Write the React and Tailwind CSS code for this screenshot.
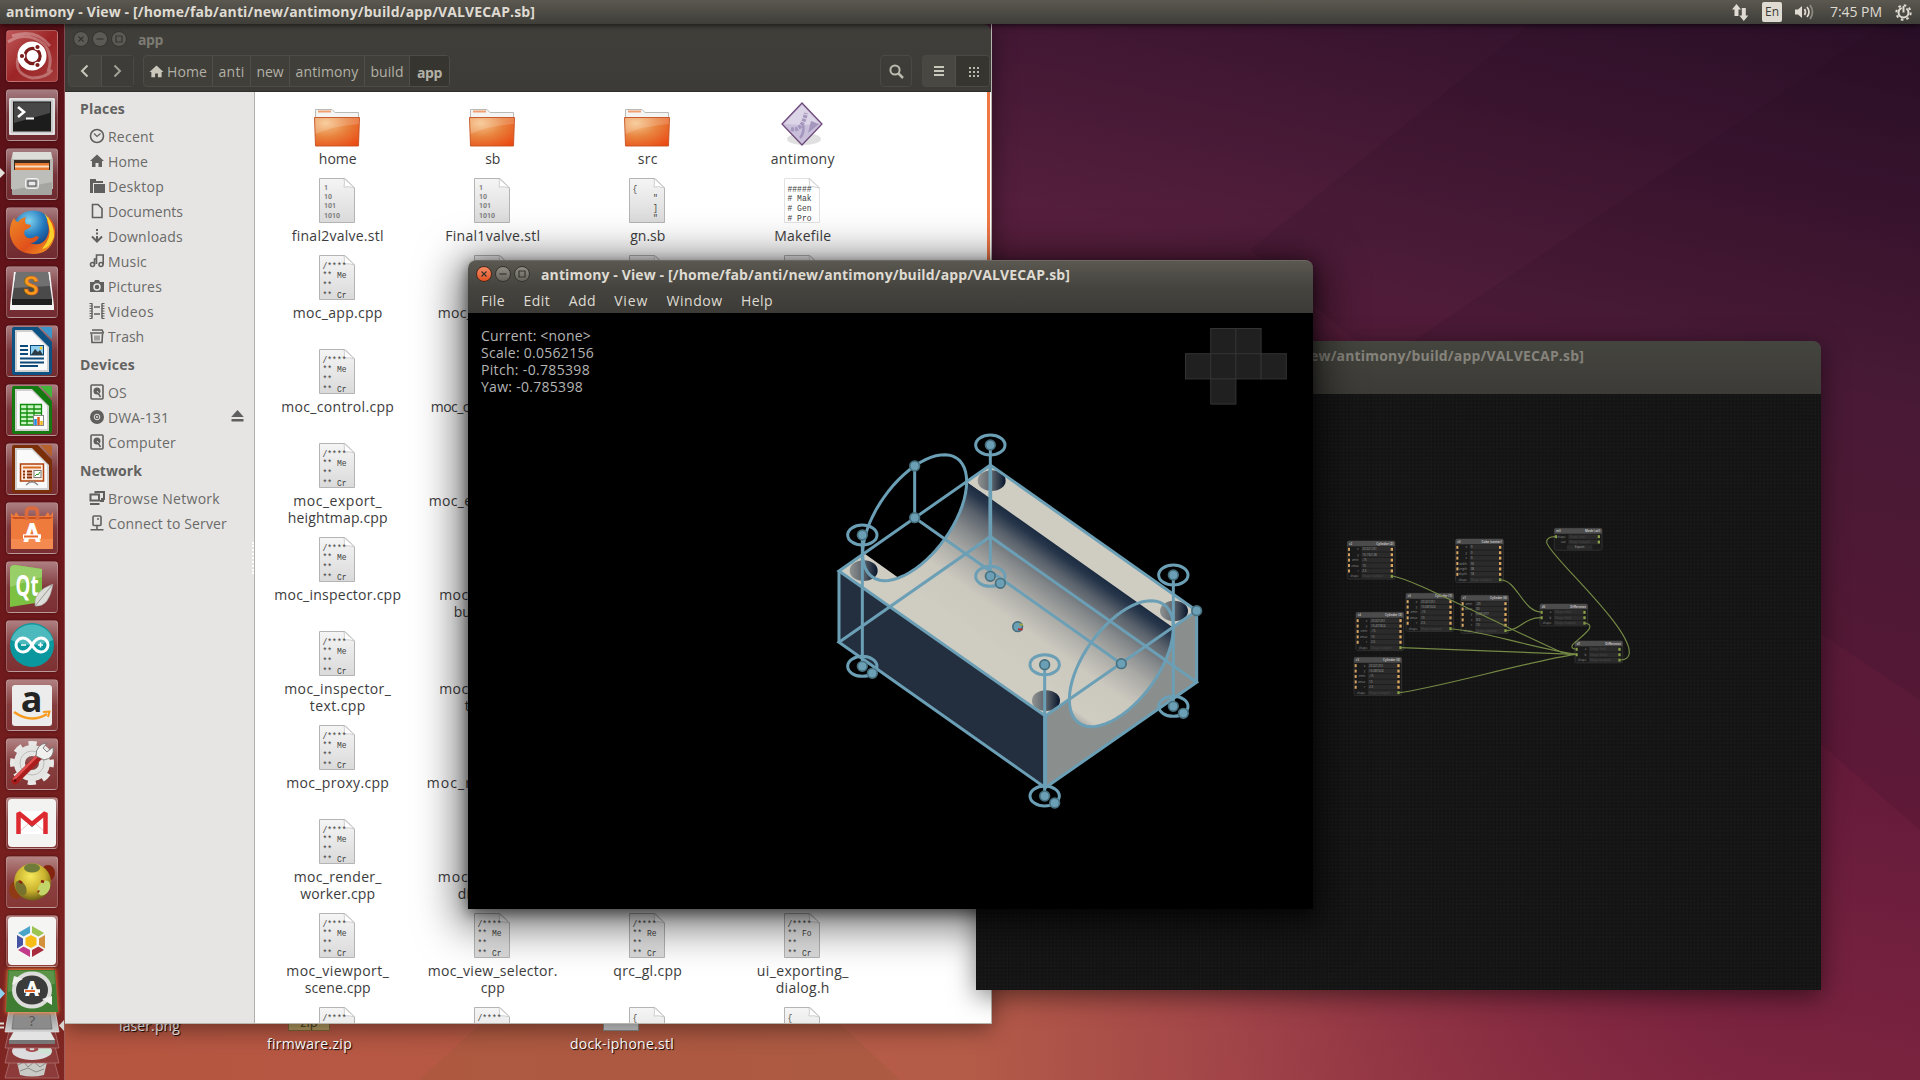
import React, { useLayoutEffect, useRef } from "react";

/* Text spread over a fixed width: letter spacing is measured at layout time. */
function Fit({ w, children, className = "" }) {
  const ref = useRef(null);
  useLayoutEffect(() => {
    const el = ref.current;
    if (!el || !w) return;
    el.style.letterSpacing = "0px";
    const natural = el.getBoundingClientRect().width;
    el.style.letterSpacing = (w - natural) / Math.max(1, el.textContent.length) + "px";
  }, [w, children]);
  return (
    <span ref={ref} className={"inline-block whitespace-pre " + className}>
      {children}
    </span>
  );
}

/* ---------- top panel ---------- */

function TopPanel() {
  return (
    <header className="absolute inset-x-0 top-0 z-50 flex h-6 items-center justify-between bg-gradient-to-b from-[#5b5850] to-[#3f3e39] pl-[6px] pr-2 text-[#dfdbd2] shadow-[0_1px_6px_rgba(0,0,0,0.7)]">
      <Fit w={529} className="-mt-px text-[14px] font-bold">
        antimony - View - [/home/fab/anti/new/antimony/build/app/VALVECAP.sb]
      </Fit>
      <div className="flex items-center">
        <svg className="mr-[13px] h-[18px] w-[18px]" viewBox="0 0 18 18" fill="#dfdbd2">
          <path d="M5.5 1 L10 6.5 H7.5 V13 H3.5 V6.5 H1z" />
          <path d="M12.8 18 L8.3 12.5 H10.8 V5 H14.8 V12.5 H17.3z" />
        </svg>
        <span className="mr-[12px] flex h-5 w-5 items-center justify-center rounded-[2px] bg-[#dfdbd2] text-[12px] leading-none text-[#3c3b37]">
          En
        </span>
        <svg className="mr-[15px] h-[18px] w-[21px]" viewBox="0 0 21 18" fill="none" strokeWidth="1.7">
          <path d="M1 6.5 H4 L8 3 V15 L4 11.5 H1z" fill="#dfdbd2" />
          <path d="M10.5 6 Q12.5 9 10.5 12" stroke="#dfdbd2" />
          <path d="M13 4 Q17 9 13 14" stroke="#dfdbd2" />
          <path d="M16 2 Q21 9 16 16" stroke="#8d8a82" />
        </svg>
        <Fit w={52} className="-mt-px mr-[13px] text-[14px]">
          7:45 PM
        </Fit>
        <svg className="h-[17px] w-[17px]" viewBox="0 0 17 17" fill="none" stroke="#dfdbd2">
          <circle cx="8.5" cy="8.5" r="5" strokeWidth="2" strokeDasharray="26.4 5" strokeDashoffset="-26.060" />
          <circle cx="8.5" cy="8.5" r="7.2" strokeWidth="2" strokeDasharray="2.6 3.06" />
          <path d="M8.5 2 V8.5" strokeWidth="2" />
        </svg>
      </div>
    </header>
  );
}

/* ---------- launcher ---------- */

function Tile({ children, plain, arrow }) {
  return (
    <div className="relative h-[52px] w-[52px] shrink-0">
      <div
        className={
          "h-full w-full overflow-hidden rounded-[4px] border border-white/20 shadow-[0_0_3px_rgba(0,0,0,0.4)] " +
          (plain || "bg-gradient-to-b from-white/45 via-white/15 to-white/10")
        }
      >
        <svg className="-ml-px -mt-px h-[52px] w-[52px]" viewBox="0 0 52 52">
          {children}
        </svg>
      </div>
      {arrow && (
        <svg className="absolute -left-[6px] top-[20px] h-[10px] w-[5px]" viewBox="0 0 5 10">
          <path d="M0 0 L5 5 L0 10z" fill="#e4e0dc" />
        </svg>
      )}
    </div>
  );
}

function OfficeDoc({ dark, light, children }) {
  return (
    <>
      <path d="M8 2 H32 L46 17 V47 Q46 50 43 50 H8 Q6 50 6 47 V4 Q6 2 8 2z" fill={dark} />
      <path d="M34 2 H44 Q46 2 46 4 V14z" fill={light} />
      <path d="M9 5 H26 L43 22 V47 H9z" fill="#d0d0d0" />
      <path d="M11 7 H26 L41 22 V45 H11z" fill="#fafafa" />
      {children}
    </>
  );
}

function Launcher() {
  return (
    <nav className="absolute bottom-0 left-0 top-6 z-10 flex w-[65px] flex-col items-start gap-[7px] border-r border-white/25 bg-gradient-to-b from-[#5a1118] via-[#6b171b] to-[#7f2622] pl-[6px] pt-[6px]">
      <Tile plain="bg-gradient-to-br from-[#c0585a] via-[#9c2426] to-[#a33a3a]">
        <path d="M2 12 Q20 0 38 14 Q48 26 42 42 M6 6 Q30 -2 44 16 M12 28 Q8 44 26 48 Q40 48 46 40" fill="none" stroke="#fff" strokeOpacity=".3" strokeWidth="3" />
        <circle cx="26" cy="26" r="14.5" fill="#fff" />
        <circle cx="26.500" cy="26" r="7.600" fill="none" stroke="#7b1c1c" strokeWidth="3.200" />
        {[[16, 26], [31.5, 17], [31.5, 35]].map(([x, y]) => (
          <circle key={y} cx={x} cy={y} r="2.700" fill="#7b1c1c" stroke="#fff" strokeWidth="1.200" />
        ))}
      </Tile>
      <Tile>
        <rect x="3" y="9" width="46" height="37" rx="1.5" fill="#c9c9c9" />
        <rect x="4" y="10" width="44" height="35" fill="none" stroke="#f4f4f4" />
        <rect x="7" y="12.500" width="38" height="30" fill="#1c1c1c" />
        <path d="M8 13.500 H44 V24 L8 34z" fill="#474747" />
        <path d="M12 18 L18 23 L12 28" fill="none" stroke="#fff" strokeWidth="2.6" />
        <path d="M20 29.500 H28" stroke="#fff" strokeWidth="2" />
      </Tile>
      <Tile arrow>
        <path d="M7 4 H45 L47 12 V41 H5 V12z" fill="#b9b9b4" />
        <path d="M7 4 H45 L46 11 H6z" fill="#dcdcd8" />
        <path d="M8 12 H44 V24 H8z" fill="#3a2b20" />
        <path d="M9 15 H43 V23 H9z" fill="#e8792e" />
        <path d="M9 17.500 H43 V19.500 H9z" fill="#f9ddbf" />
        <path d="M6 22 H46 V46 Q46 47 45 47 H7 Q6 47 6 46z" fill="#a5a5a2" />
        <path d="M6 22 H46 V34 L6 42z" fill="#bdbdba" />
        <rect x="19.500" y="30.500" width="13" height="10" rx="2" fill="#c9c9c9" stroke="#f0f0f0" />
        <rect x="22" y="33" width="8" height="5" fill="#e9e9e9" stroke="#444" />
      </Tile>
      <Tile>
        <defs>
          <radialGradient id="ffb" cx=".4" cy=".25" r=".75">
            <stop offset="0" stopColor="#7fd3ef" />
            <stop offset=".5" stopColor="#2378bd" />
            <stop offset="1" stopColor="#12306b" />
          </radialGradient>
          <linearGradient id="ffo" x1="0" y1="0" x2="1" y2="1">
            <stop offset="0" stopColor="#f08a24" />
            <stop offset=".6" stopColor="#e0501c" />
            <stop offset="1" stopColor="#f7a823" />
          </linearGradient>
        </defs>
        <circle cx="27" cy="24" r="20.500" fill="url(#ffb)" />
        <path d="M42 9 Q52 19 48 32 Q43 47 27 47 Q8 46 4 28 Q3 18 8 11 Q9 14 12 15 Q15 11 20 10 Q18 14 20 17 L25 18 Q25 21 19 23 Q17 27 20 30 Q25 33 30 29 L33 30 Q30 36 24 36 Q34 40 40 32 Q45 24 41 15z" fill="url(#ffo)" />
        <path d="M38 6 Q49 16 48 30 Q43 42 36 42 Q46 30 43 20 Q42 12 38 6z" fill="#fbd22c" />
      </Tile>
      <Tile>
        <path d="M8 6 H44 L48 40 V44 H4 V40z" fill="#f3f3f3" />
        <path d="M10 6 H42 L46 33 H6z" fill="#4a4a4a" />
        <path d="M10 6 H42 L44 20 L8 22z" fill="#707070" />
        <path d="M6 33 H46 V39 H6z" fill="#1f1f1f" />
        <text x="25" y="29" fontFamily="Roboto, sans-serif" fontWeight="700" fontSize="25" textAnchor="middle" fill="#ff9a1f" stroke="#b85c00" strokeWidth=".5">
          S
        </text>
      </Tile>
      <Tile>
        <OfficeDoc dark="#0e5284" light="#3d95c9">
          <path d="M14 21 H22 M14 25 H22 M14 29 H22 M14 33.500 H38 M14 37.500 H38 M14 41 H32" stroke="#0d4a7a" strokeWidth="1.8" />
          <rect x="24.500" y="20.500" width="13" height="9.500" fill="#8ed0f2" stroke="#0d4a7a" />
          <path d="M25 30 L29 24 L32 27 L34 25 L37 30z" fill="#2c3c44" />
          <circle cx="35" cy="23" r="1.500" fill="#f9c921" />
        </OfficeDoc>
      </Tile>
      <Tile>
        <OfficeDoc dark="#14790f" light="#42b53a">
          <path d="M14.500 20.500 H35.500 V41 H14.500z M14.500 25 H35.500 M14.500 29 H35.500 M14.500 33 H35.500 M14.500 37 H35.500 M21 20 V41 M28 20 V41" stroke="#128c0d" strokeWidth="1.300" fill="#c8f5c2" />
          <rect x="27.500" y="31.500" width="10" height="10" fill="#fff" stroke="#888" />
          <path d="M29.500 41 V35" stroke="#1b8ae0" strokeWidth="2.500" />
          <path d="M32.500 41 V33" stroke="#e05a1b" strokeWidth="2.500" />
          <path d="M35.500 41 V37" stroke="#f0b81b" strokeWidth="2.500" />
        </OfficeDoc>
      </Tile>
      <Tile>
        <OfficeDoc dark="#7a2f08" light="#b5622c">
          <rect x="14.500" y="21" width="23" height="17" fill="#fde9dc" stroke="#b0400c" strokeWidth="1.500" />
          <path d="M17 24.500 H35" stroke="#d86a20" strokeWidth="2" />
          <path d="M17 28.500 H19 M17 31.500 H19 M17 34.500 H19 M21 28.500 H26 M21 31.500 H26 M21 34.500 H26" stroke="#8a2c05" strokeWidth="2" />
          <rect x="28" y="27.500" width="7" height="7" fill="#fff" stroke="#777" />
          <path d="M29 33 L31 31 L32 32 L34 29" stroke="#2a9a2a" fill="none" />
          <path d="M20 42 L24 39 H28 L32 42" fill="none" stroke="#888" strokeWidth="1.500" />
        </OfficeDoc>
      </Tile>
      <Tile>
        <path d="M5 11 L8 14 L10 10 L13 14 H39 L42 10 L44 14 L47 10 V47 H5z" fill="#ee7a3c" />
        <path d="M5 15 H47 L44 17 H8z" fill="#c9511f" />
        <path d="M5 37 H47 V47 H5z" fill="#f58a50" />
        <path d="M20.500 18 V10 Q20.500 6 26 6 Q31.500 6 31.500 10 V18" fill="none" stroke="#dd6a3c" strokeWidth="3.500" />
        <text x="26" y="40" fontFamily="Roboto, sans-serif" fontWeight="900" fontSize="25" textAnchor="middle" fill="#fff">
          A
        </text>
        <path d="M17 34.500 H35" stroke="#fff" strokeWidth="4.500" />
        <path d="M18 34.500 H32" stroke="#e8672a" strokeWidth="2" />
      </Tile>
      <Tile>
        <path d="M4 8 Q4 4 9 4 L36 8 V41 L4 46z" fill="#7cc142" />
        <path d="M4 8 Q4 4 9 4 L36 8 V16 L4 26z" fill="#98cf68" />
        <text x="21" y="35" fontFamily="Open Sans, sans-serif" fontWeight="700" fontSize="28" textLength="23" lengthAdjust="spacingAndGlyphs" textAnchor="middle" fill="#fff">
          Qt
        </text>
        <path d="M47 23 Q27 30 29 45 Q43 47 47 23z" fill="#dcdcd8" stroke="#9a9a96" strokeWidth=".5" />
        <path d="M47 23 Q38 34 29 45" stroke="#9a9a96" fill="none" />
      </Tile>
      <Tile>
        <circle cx="26" cy="25" r="22" fill="#0a979d" />
        <path d="M5 20 A22 22 0 0 1 47 20 Q26 30 5 20z" fill="#4cb9bc" />
        <path d="M26 25 Q22 18 17 18 A7 7 0 0 0 17 32 Q22 32 26 25 Q30 18 35 18 A7 7 0 0 1 35 32 Q30 32 26 25z" fill="none" stroke="#fff" strokeWidth="3" />
        <path d="M15 25 H20 M32 25 H37 M34.500 22.500 V27.500" stroke="#fff" strokeWidth="1.500" />
      </Tile>
      <Tile>
        <rect x="6" y="6" width="40" height="41" rx="3" fill="#ececec" />
        <text x="25.500" y="33" fontFamily="Open Sans, sans-serif" fontWeight="700" fontSize="36" textAnchor="middle" fill="#242424">
          a
        </text>
        <path d="M8 33 Q25 45 41 35" fill="none" stroke="#f79a1c" strokeWidth="2.500" />
        <path d="M37 33 L43.500 32.500 L42 38" fill="none" stroke="#f79a1c" strokeWidth="2" />
      </Tile>
      <Tile>
        <circle cx="26" cy="25" r="19" fill="none" stroke="#e8e8e6" strokeWidth="6" strokeDasharray="8 6.920" strokeDashoffset="4" />
        <circle cx="26" cy="25" r="12.500" fill="none" stroke="#e4e4e2" strokeWidth="11" />
        <circle cx="26" cy="25" r="12" fill="none" stroke="#bdbdbb" strokeWidth="1" />
        <path d="M9 43 L34 18" stroke="#a91d1d" strokeWidth="7" strokeLinecap="round" />
        <path d="M8 41 L32 17" stroke="#e05050" strokeWidth="2.500" strokeLinecap="round" />
        <path d="M30 18 Q30 6 41 5 L37 10 L41 14 L47 9 Q49 20 38 22z" fill="#f0f0ee" stroke="#6a6a6a" strokeWidth=".8" />
        <circle cx="9" cy="42.500" r="1.500" fill="#5c0d0d" />
      </Tile>
      <Tile>
        <rect x="2" y="2" width="48" height="48" rx="4" fill="#f3f3f1" />
        <path d="M11 14 H41 V37 H11z" fill="#fff" />
        <path d="M12 36 L23 26 M40 36 L29 26" stroke="#e7a5a2" strokeWidth=".7" />
        <path d="M17 20 L26 29.500 L35 20" fill="none" stroke="#777" strokeWidth="1.500" />
        <path d="M12.500 37 V16 L26 27 L39.500 16 V37" fill="none" stroke="#dd2a30" strokeWidth="4.500" strokeLinejoin="bevel" />
      </Tile>
      <Tile>
        <defs>
          <radialGradient id="ball" cx=".45" cy=".35" r=".65">
            <stop offset="0" stopColor="#f7e85a" />
            <stop offset=".6" stopColor="#c9b22e" />
            <stop offset="1" stopColor="#6e6015" />
          </radialGradient>
        </defs>
        <ellipse cx="10" cy="34" rx="7" ry="9" fill="#8f3a14" />
        <ellipse cx="42" cy="17" rx="7" ry="8" fill="#82240f" />
        <circle cx="26.500" cy="26" r="18.500" fill="url(#ball)" />
        <ellipse cx="26" cy="12" rx="8" ry="4.500" fill="#6f7c39" />
        <ellipse cx="15" cy="32" rx="5" ry="8" transform="rotate(-25 15 32)" fill="#77732f" />
        <ellipse cx="38" cy="32" rx="5.500" ry="8" transform="rotate(30 38 32)" fill="#c3d568" />
        <path d="M35 25 L38 26 M13 25 L16 27 M32 35 L33 36" stroke="#8c2410" strokeWidth="2.500" />
      </Tile>
      <Tile>
        <rect x="2" y="2" width="48" height="48" rx="4" fill="#f5f5f4" />
        <path d="M25 20 L30.500 23 V30 L25 33 L19.500 30 V23z" fill="#f7bd16" />
        <path d="M24 11 V18 L17.500 21.500 L12 18z" fill="#4aa3c9" />
        <path d="M26 11 V18 L32.500 21.500 L38 18z" fill="#9cc452" />
        <path d="M11 20 L17 23.500 V30 L11 33.500z" fill="#4553a3" />
        <path d="M39 20 L33 23.500 V30 L39 33.500z" fill="#d3913c" />
        <path d="M24 42 V35 L17.500 31.500 L12 35z" fill="#c33a8b" />
        <path d="M26 42 V35 L32.500 31.500 L38 35z" fill="#a82c3c" />
      </Tile>
      <svg className="-ml-[6px] -mt-[11px] h-[117px] w-[65px] shrink-0" viewBox="0 963 65 117">
        <defs>
          <filter id="glow" x="-30%" y="-30%" width="160%" height="160%">
            <feGaussianBlur stdDeviation="2" />
          </filter>
          <linearGradient id="gry" x1="0" y1="0" x2="0" y2="1">
            <stop offset="0" stopColor="#8c8c8c" />
            <stop offset="1" stopColor="#d0d0d0" />
          </linearGradient>
        </defs>
        <path d="M10 1060 H54 L59 1078 H5z" fill="#8d3a3a" stroke="#b57a78" strokeWidth=".7" />
        <path d="M17 1062 Q32 1058 47 1062 L44 1075 Q32 1078 20 1075z" fill="#c9c9c6" />
        <path d="M18 1065 L24 1062 L28 1067 L34 1062 L40 1067 L46 1063 M20 1071 L28 1068 L36 1072 L44 1069" fill="none" stroke="#8a8a88" />
        <path d="M9 1046 H55 L59 1063 H5z" fill="#8d3a3a" stroke="#b57a78" strokeWidth=".7" />
        <ellipse cx="32" cy="1051" rx="20" ry="9" fill="#dcdcdf" />
        <path d="M32 1051 L49 1047 Q53 1051 50 1055z" fill="#cfe3d4" />
        <ellipse cx="32" cy="1049" rx="6.500" ry="3" fill="#a44c50" />
        <ellipse cx="32" cy="1049" rx="2.500" ry="1.200" fill="#d8d8d8" />
        <path d="M9 1031 H55 L59 1048 H5z" fill="#843636" stroke="#b57a78" strokeWidth=".7" />
        <path d="M14 1031 H50 L55 1040 V1044 H9 V1040z" fill="#e3e3e3" />
        <path d="M9 1040 H55 V1044 H9z" fill="#777" />
        <path d="M9 1010 H55 L59 1032 H5z" fill="url(#gry)" stroke="#e0dede" strokeWidth=".7" />
        <path d="M14 1014 H50 L52 1029 H12z" fill="#8b8b8b" stroke="#777" />
        <text x="32" y="1026" fontFamily="Open Sans, sans-serif" fontSize="15" textAnchor="middle" fill="#555">?</text>
        <path d="M8 969 H55 L58 1013 H6z" fill="#ff8a3c" filter="url(#glow)" />
        <path d="M8 970 H55 L58 1012 H6z" fill="#3f7d33" />
        <path d="M9 971 H54 L55 984 L8 992z" fill="#5b9448" />
        <ellipse cx="32" cy="990" rx="18" ry="16.500" fill="#3b3b3b" stroke="#dcdcda" strokeWidth="4" />
        <path d="M12 985 L14 976 L23 979z M52 996 L52 1005 L42 999z" fill="#efefed" />
        <text x="32" y="996" fontFamily="Roboto, sans-serif" fontWeight="900" fontSize="20" textAnchor="middle" fill="#fff">A</text>
        <path d="M24 991 H40" stroke="#fff" strokeWidth="3.500" />
        <path d="M25 991 H35" stroke="#e8672a" strokeWidth="2" />
        <path d="M0 988 L5 993.500 L0 999z" fill="#8fd0ee" />
        <path d="M0 1023.500 H4 M0 1027.500 H4" stroke="#e0dcd8" strokeWidth="2" />
        <path d="M64 1020 L59 1025.500 L64 1031z" fill="#d8d4d0" />
      </svg>
    </nav>
  );
}

/* ---------- window parts ---------- */

function WindowButtons({ active }) {
  const ring = "flex h-4 w-4 items-center justify-center rounded-full border ";
  const grey = active
    ? "border-[#33322e] bg-gradient-to-b from-[#8f8c83] to-[#66645d]"
    : "border-[#35342f] bg-[#5c5a55]";
  const red = active ? "border-[#4a2a1c] bg-gradient-to-b from-[#f58a64] to-[#e1511e]" : grey;
  return (
    <div className="flex gap-[3px]">
      {[["M4.500 4.500 L9.500 9.500 M9.500 4.500 L4.500 9.500", red], ["M3.500 7 H10.500", grey], ["M4 4 H10 V10 H4z", grey]].map(([d, tone]) => (
        <span key={d} className={ring + tone}>
          <svg className="h-[14px] w-[14px] shrink-0" viewBox="0 0 14 14" fill="none" stroke="#35342f" strokeWidth="1.200">
            <path d={d} />
          </svg>
        </span>
      ))}
    </div>
  );
}

/* ---------- file manager ---------- */

const S = { fill: "none", stroke: "#5f5f5f", strokeWidth: 1.6 };
const icons = {
  recent: (<g {...S}><circle cx="8" cy="8" r="6.500" /><path d="M5 5.500 L8 8.500 L11.500 5.500" strokeWidth="1.200" /></g>),
  home: (<path d="M8 1.500 L15 8 H13 V14 H9.500 V10 H6.500 V14 H3 V8 H1z" fill="#5f5f5f" />),
  desktop: (<g><path d="M1 1 H7 V3 H14 V5 H4 V15 H1z" fill="#5f5f5f" /><path d="M5 6 H16 V15 H5z" fill="#5f5f5f" /></g>),
  doc: (<path d="M3.500 1.500 H9 L13 5.500 V14.500 H3.500z" {...S} />),
  down: (<g><path d="M8 1 V3 M8 4.500 V6.500 M8 8 V13" stroke="#5f5f5f" strokeWidth="2" /><path d="M3 8.500 L8 13.500 L13 8.500" {...S} strokeWidth="2" /></g>),
  music: (<g {...S}><circle cx="3.500" cy="11.500" r="2" /><circle cx="12" cy="11.500" r="2" /><path d="M5.500 11.500 V6 H8 M7.500 11 V2 H14.200 V11.500" /></g>),
  camera: (<g><path d="M1 4 H5 L6 2 H10 L11 4 H15 V14 H1z" fill="#5f5f5f" /><circle cx="8" cy="9" r="3" fill="#5f5f5f" stroke="#e6e5e3" strokeWidth="1.500" /></g>),
  film: (<g><path d="M3 1 V15 M13 1 V15 M5 4 H11 M5 11 H11" {...S} strokeWidth="1.400" /><path d="M2 0 V16 M14 0 V16" stroke="#5f5f5f" strokeWidth="3" strokeDasharray="1 1.500" /></g>),
  trash: (<g {...S}><path d="M1 5 H15 M3 2 H13 L14.500 5 M2.500 6 L3 14.500 H13 L13.500 6" /><path d="M6 7.500 V12.500 M8 7.500 V12.500 M10 7.500 V12.500" strokeWidth="1" /></g>),
  disk: (<g><rect x="2" y="1" width="12" height="14" rx="1" {...S} /><circle cx="8" cy="7" r="3.500" fill="#5f5f5f" /><path d="M8 7 L12 12" stroke="#e6e5e3" /><path d="M9 9 L11.500 13" stroke="#5f5f5f" strokeWidth="1.500" /></g>),
  cd: (<g><circle cx="8" cy="8" r="7" fill="#5f5f5f" /><circle cx="8" cy="8" r="2.800" fill="none" stroke="#e6e5e3" /><circle cx="8" cy="8" r="1" fill="#e6e5e3" /></g>),
  net: (<g {...S}><path d="M6.500 3.500 V2 H15 V9 H12" strokeWidth="2" /><rect x="1.500" y="4.500" width="8.500" height="6" strokeWidth="2" /><path d="M1 14 H10.500 M11 11 H15" strokeWidth="2" /></g>),
  server: (<g {...S}><rect x="4" y="1" width="8" height="9.500" rx="1" /><path d="M8 11 V14 M1.500 14.800 H14.500 M8 4 H10" /></g>),
};

const places = [
  ["Places", 45, [["recent", "Recent", 46], ["home", "Home", 40], ["desktop", "Desktop", 56], ["doc", "Documents", 75], ["down", "Downloads", 75], ["music", "Music", 39], ["camera", "Pictures", 54], ["film", "Videos", 46], ["trash", "Trash", 36]]],
  ["Devices", 55, [["disk", "OS", 19], ["cd", "DWA-131", 61, true], ["disk", "Computer", 68]]],
  ["Network", 62, [["net", "Browse Network", 112], ["server", "Connect to Server", 119]]],
];

function Sidebar() {
  return (
    <aside className="relative w-[190px] shrink-0 border-r border-[#b3afaa] bg-[#e6e5e3] pt-[1px] text-[14px] text-[#6a6a69]">
      {places.map(([title, w, items]) => (
        <section key={title}>
          <h2 className="flex h-[31px] items-center pl-[15px] font-bold text-[#626261]">
            <Fit w={w}>{title}</Fit>
          </h2>
          {items.map(([icon, label, lw, eject]) => (
            <div key={label} className="flex h-[25px] items-center pl-6">
              <svg className="-mt-[2px] mr-[3px] h-4 w-4" viewBox="0 0 16 16">{icons[icon]}</svg>
              <Fit w={lw}>{label}</Fit>
              {eject && (
                <svg className="-mt-[3px] ml-auto mr-[10px] h-3 w-[13px]" viewBox="0 0 13 12" fill="#5f5f5f">
                  <path d="M6.500 0 L12.800 7 H0.200z M0.500 9 H12.500 V11.500 H0.500z" />
                </svg>
              )}
            </div>
          ))}
        </section>
      ))}
      <div className="absolute right-0 top-[450px] h-8 border-r-2 border-dotted border-white" />
    </aside>
  );
}

function Folder() {
  return (
    <svg className="h-12 w-12" viewBox="0 0 48 48">
      <defs>
        <radialGradient id="fold" cx=".25" cy=".2" r="1">
          <stop offset="0" stopColor="#f6c48a" />
          <stop offset=".5" stopColor="#e8813c" />
          <stop offset="1" stopColor="#ea4a13" />
        </radialGradient>
      </defs>
      <path d="M2.500 20 V9.500 H19 L22 12.500 H45.500 V20z" fill="#f4f4f2" stroke="#b9b9b6" />
      <path d="M5 11.500 H18" stroke="#f0a070" strokeWidth="2" />
      <path d="M1.500 17.500 H46.500 L45.500 46 H2.500z" fill="url(#fold)" stroke="#c4501f" strokeWidth=".9" />
      <path d="M2 18 H46 V24 Q20 26 2.500 34z" fill="#fff" opacity=".17" />
    </svg>
  );
}

function Executable() {
  return (
    <svg className="h-12 w-12" viewBox="0 0 48 48">
      <ellipse cx="26" cy="39" rx="17" ry="6" fill="#000" opacity=".12" />
      <path d="M24 3 L44 24 L24 45 L4 24z" fill="#c9bfda" stroke="#6f4a7c" strokeWidth="1.300" />
      <path d="M24 5 L42 24 L24 25 L6 24z" fill="#e9e3f0" opacity=".6" />
      <path d="M13 29 Q24 32 28 13" fill="none" stroke="#a596bd" strokeWidth="4" strokeDasharray="3 1" />
      <path d="M22 38 Q27 32 25 25" fill="none" stroke="#a596bd" strokeWidth="2.500" />
      <path d="M30 33 L33 21 L41 24z" fill="#a596bd" />
    </svg>
  );
}

const CODE = (word) => ["/****", "** " + word, "**", "** Cr"];
const pages = {
  bin: ["1", "10", "101", "1010"],
  json: ["{", "\"", "]", "\""],
  make: ["#####", "# Mak", "# Gen", "# Pro"],
  me: CODE("Me"),
  re: CODE("Re"),
  fo: CODE("Fo"),
};

function Page({ kind }) {
  const bin = kind === "bin";
  const make = kind === "make";
  return (
    <svg className="h-12 w-12" viewBox="0 0 48 48">
      <defs>
        <linearGradient id="sheet" x1="0" y1="0" x2="0" y2="1">
          <stop offset="0" stopColor="#f5f5f5" />
          <stop offset="1" stopColor="#dadada" />
        </linearGradient>
      </defs>
      <path d="M6.500 1.500 H32 L41.500 11 V45.500 H6.500z" fill={make ? "#fff" : "url(#sheet)"} stroke={make ? "#e2e2e2" : "#b4b4b4"} />
      <path d="M31 1.500 Q32 6 31 10 Q36 9 41.500 11z" fill="#fff" stroke="#c4c4c4" strokeWidth=".8" />
      {pages[kind].map((line, i) => (
        <text
          key={i}
          x={bin ? 11 : kind === "json" && i > 0 ? 30 : 9.500}
          y={bin ? 13 + i * 9.200 : 14.500 + i * 9.800}
          fontFamily={bin ? "Roboto, sans-serif" : "Liberation Mono, monospace"}
          fontWeight={bin ? 700 : 400}
          fontSize={bin ? 7 : 9.500}
          textLength={bin ? undefined : line.length * 4.800}
          lengthAdjust="spacingAndGlyphs"
          className="whitespace-pre"
          fill={bin ? "#7d7d7d" : "#3c3c3c"}
        >
          {line}
        </text>
      ))}
    </svg>
  );
}

const rows = [
  [77, [["folder", ["home", 38]], ["folder", ["sb", 15]], ["folder", ["src", 20]], ["exec", ["antimony", 64]]]],
  [77, [["bin", ["final2valve.stl", 92]], ["bin", ["Final1valve.stl", 95]], ["json", ["gn.sb", 35]], ["make", ["Makefile", 57]]]],
  [94, [["me", ["moc_app.cpp", 90]], ["me", ["moc_canvas.cpp", 110]], ["me"], ["me"]]],
  [94, [["me", ["moc_control.cpp", 113]], ["me", ["moc_connection.cpp", 124]]]],
  [94, [["me", ["moc_export_", 89], ["heightmap.cpp", 100]], ["me", ["moc_export_mesh.", 128]]]],
  [94, [["me", ["moc_inspector.cpp", 127]], ["me", ["moc_inspector_", 107], ["buttons.cpp", 78]]]],
  [94, [["me", ["moc_inspector_", 107], ["text.cpp", 56]], ["me", ["moc_inspector_", 107], ["title.cpp", 56]]]],
  [94, [["me", ["moc_proxy.cpp", 103]], ["me", ["moc_render_task.", 132]]]],
  [94, [["me", ["moc_render_", 88], ["worker.cpp", 75]], ["me", ["moc_viewport_", 110], ["dialog.cpp", 70]]]],
  [94, [["me", ["moc_viewport_", 103], ["scene.cpp", 66]], ["me", ["moc_view_selector.", 130], ["cpp", 24]], ["re", ["qrc_gl.cpp", 69]], ["fo", ["ui_exporting_", 92], ["dialog.h", 54]]]],
  [94, [["me"], ["me"], ["json"], ["json"]]],
];

function FileGrid() {
  return (
    <div className="relative flex-1 overflow-hidden bg-white pl-[5px] pt-[7px] text-[14px] text-[#3c3c3c]">
      {rows.map(([h, files], r) => (
        <div key={r} className={"grid grid-cols-[repeat(4,155px)] " + (h === 77 ? "h-[77px]" : "h-[94px]")}>
          {files.map(([kind, ...lines], c) => (
            <div key={c} className="flex flex-col items-center pl-[0.5px] pt-px">
              <div className="-ml-px mb-[2px] h-12">
                {kind === "folder" ? <Folder /> : kind === "exec" ? <Executable /> : <Page kind={kind} />}
              </div>
              {lines.map(([text, w]) => (
                <Fit key={text} w={w} className="leading-[17px]">{text}</Fit>
              ))}
            </div>
          ))}
        </div>
      ))}
      <div className="absolute right-px top-0 h-[600px] w-[3px] bg-[#f07746]" />
    </div>
  );
}

function FileManager() {
  const crumbs = [["anti", 26, "w-[38px]"], ["new", 27, "w-[39px]"], ["antimony", 63, "w-[75px]"], ["build", 33, "w-[45px]"]];
  const cell = "flex h-full items-center justify-center border-r border-[#504f49] ";
  return (
    <section className="absolute left-[65px] top-6 flex h-[1000px] w-[927px] flex-col border-b border-r border-[#b8b4ae] shadow-[0_4px_22px_rgba(0,0,0,0.45)]">
      <header className="h-[68px] shrink-0 rounded-tr-lg border-b border-[#2f2e2a] bg-gradient-to-b from-[#403f3a] to-[#3c3b37]">
        <div className="flex h-[30px] items-center pl-[8px]">
          <WindowButtons />
          <Fit w={25} className="ml-[11px] text-[14px] font-bold text-[#7d7b74]">app</Fit>
        </div>
        <div className="flex h-8 items-center pl-[3px] pr-px pt-[2px] text-[14px] text-[#b3b1a6]">
          <div className="mr-[9px] flex h-8 w-[66px] rounded-[4px] border border-[#4a4943] bg-[#44433e]">
            <span className={cell + "w-[33px] pr-px"}>
              <svg className="h-[14px] w-[9px]" viewBox="0 0 9 14" fill="none" stroke="#c9c6ba" strokeWidth="2"><path d="M7.500 1.500 L2 7 L7.500 12.500" /></svg>
            </span>
            <span className="flex flex-1 items-center justify-center bg-[#3d3c38]">
              <svg className="h-[14px] w-[9px]" viewBox="0 0 9 14" fill="none" stroke="#a3a197" strokeWidth="2"><path d="M1.500 1.500 L7 7 L1.500 12.500" /></svg>
            </span>
          </div>
          <div className="flex h-8 w-[307px] overflow-hidden rounded-[4px] border border-[#4d4c46] bg-[#403f3a]">
            <span className={cell + "w-[69px] gap-[3px]"}>
              <svg className="h-[15px] w-[15px]" viewBox="0 1 16 14"><path d="M8 1.500 L15.500 8.500 H13.500 V14 H9.500 V10 H6.500 V14 H2.500 V8.500 H.5z" fill="#c9c6ba" /></svg>
              <Fit w={40}>Home</Fit>
            </span>
            {crumbs.map(([name, w, width]) => (
              <span key={name} className={cell + width}><Fit w={w}>{name}</Fit></span>
            ))}
            <span className="flex flex-1 items-center justify-center bg-[#363530] pt-[3px] font-bold"><Fit w={25}>app</Fit></span>
          </div>
          <span className="ml-auto mr-[10px] flex h-8 w-8 items-center justify-center rounded-[4px] border border-[#4a4943]">
            <svg className="h-[15px] w-[15px]" viewBox="0 0 15 15" fill="none" stroke="#bcb9ae" strokeWidth="2"><circle cx="6" cy="6" r="4.600" /><path d="M9.500 9.500 L14 14" strokeWidth="2.500" /></svg>
          </span>
          <div className="flex h-8 w-[68px] overflow-hidden rounded-[4px] border border-[#4a4943] bg-[#484741]">
            <span className={cell + "w-[33px]"}>
              <svg className="h-[10px] w-[10px]" viewBox="0 0 10 10" stroke="#c9c6ba" strokeWidth="2"><path d="M0 1 H10 M0 5 H10 M0 9 H10" /></svg>
            </span>
            <span className="flex flex-1 items-center justify-center bg-[#363530] pl-[2px] pt-[2px]">
              <svg className="h-[10px] w-[10px]" viewBox="0 0 10 10" stroke="#b9b6ab" strokeWidth="2" strokeDasharray="2 2"><path d="M0 1 H10 M0 5 H10 M0 9 H10" /></svg>
            </span>
          </div>
        </div>
      </header>
      <div className="flex min-h-0 flex-1">
        <Sidebar />
        <FileGrid />
      </div>
    </section>
  );
}

/* ---------- graph window ---------- */

const X = 143;
const nodes = [
  [82, 93, "c2", "Cylinder (2)", [["x", "23.021251"], ["y", "10.192128"], ["zmin", "-15"], ["zmax", "10"], ["r", "2.5"], ["shape", "Shape (output)"]]],
  [407, 87, "c0", "Cube (center)", [["x", "0"], ["y", "0"], ["z", "0"], ["width", "50"], ["length", "38"], ["depth", "18"], ["shape", "Shape (output)"]]],
  [108, 307, "c4", "Cylinder (3)", [["x", "23.021251"], ["y", "10.431824"], ["zmin", "-15"], ["zmax", "10"], ["r", "2.5"], ["shape", "Shape (output)"]]],
  [102, 442, "c3", "Cylinder (0)", [["x", "23.021251"], ["y", "10.081024"], ["zmin", "-15"], ["zmax", "10"], ["r", "2.5"], ["shape", "Shape (output)"]]],
  [258, 250, "c5", "Cylinder (1)", [["x", "23.021251"], ["y", "10.081024"], ["zmin", "-15"], ["zmax", "10"], ["r", "2.5"], ["shape", "Shape (output)"]]],
  [423, 256, "c1", "Cylinder (0)", [["xmin", "-30"], ["xmax", "30"], ["y", "0.081577"], ["z", "9.0"], ["r", "13"], ["shape", "Shape (output)"]]],
  [660, 282, "d0", "Difference", [["a", "Shape (link)"], ["b", "Shape (link)"], ["shape", "Shape (output)"]]],
  [765, 393, "d1", "Difference", [["a", "Shape (link)"], ["b", "Shape (links)"], ["shape", "Shape (output)"]]],
  [703, 55, "m0", "Mesh (.stl)", [["shape", "Shape (link)"], ["out", "Shape (output)"], [null, "Export"]]],
];

function GraphNode({ node: [x, y, id, type, fields] }) {
  return (
    <g fontFamily="Open Sans, sans-serif" fontSize="9">
      <rect x={x} y={y} width={X} height={17 + fields.length * 16.200} rx="5" fill="#1b1b1b" stroke="#303030" strokeWidth="3" />
      <path d={`M${x} ${y + 16} V${y + 4} Q${x} ${y} ${x + 4} ${y} H${x + X - 4} Q${x + X} ${y} ${x + X} ${y + 4} V${y + 16}z`} fill="#4c4c4c" />
      <text x={x + 5} y={y + 11} fontWeight="700" fill="#b4b4b4">{id}</text>
      <text x={x + X - 5} y={y + 11} fontWeight="700" textAnchor="end" fill="#c4c4c4">{type}</text>
      {fields.map(([name, value], i) => {
        const ty = y + 25 + i * 16.200;
        const shape = value.startsWith("Shape");
        return name === null ? (
          <g key={i}>
            <rect x={x + 38} y={ty - 7} width="76" height="14" fill="#2b2b2b" />
            <text x={x + 76} y={ty + 3} textAnchor="middle" fill="#a5a5a5">{value}</text>
          </g>
        ) : (
          <g key={i}>
            <rect x={x + 42} y={ty - 7} width="88" height="14" fill="#2b2b2b" />
            <text x={x + 34} y={ty + 3} textAnchor="end" fill="#8f8f8f">{name}</text>
            <text x={x + 45} y={ty + 3} fill={shape ? "#505050" : "#a5a5a5"}>{value}</text>
            {(!shape || (name !== "shape" && name !== "out") || id === "m0") && !(name === "out") && (
              <rect x={x + 2} y={ty - 4.500} width="6" height="9" fill={shape ? "#8aa04a" : "#dba765"} />
            )}
            <rect x={x + X - 13} y={ty - 4.500} width="7" height="9" fill={shape ? "#8aa04a" : "#dba765"} />
          </g>
        );
      })}
    </g>
  );
}

function GraphWindow() {
  return (
    <section className="absolute left-[976px] top-[341px] flex h-[649px] w-[845px] flex-col overflow-hidden rounded-t-lg shadow-[0_6px_26px_rgba(0,0,0,0.5)]">
      <header className="h-[53px] shrink-0 bg-gradient-to-b from-[#45453f] to-[#3c3b37]">
        <div className="flex h-[28px] items-center justify-end pr-[237px]">
          <Fit w={542} className="text-[14px] font-bold text-[#85837b]">
            antimony - Graph - [/home/fab/anti/new/antimony/build/app/VALVECAP.sb]
          </Fit>
        </div>
      </header>
      <div className="flex-1 bg-[#141414] bg-[radial-gradient(circle,#1c1c1c_0.5px,transparent_1px)] bg-[length:3.66px_3.66px] pl-[344px] pt-[116px]">
        <svg className="h-[200px] w-[320px]" viewBox="0 0 960 600">
          {nodes.map((n) => <GraphNode key={n[0]} node={n} />)}
          <g fill="none" stroke="#758a45" strokeWidth="3.500">
            <path d="M217 198 C260 205 340 245 560 350 S720 425 767 433" />
            <path d="M543 210 C590 210 610 306 663 306" />
            <path d="M558 362 C600 362 610 323 663 323" />
            <path d="M392 357 C480 360 600 405 767 433" />
            <path d="M243 413 L767 433" />
            <path d="M237 548 C350 535 640 450 767 433" />
            <path d="M793 339 C840 345 775 385 757 405 Q752 416 767 417" />
            <path d="M898 450 C950 450 930 395 870 320 C790 220 690 130 680 98 Q678 80 706 80" />
          </g>
        </svg>
      </div>
    </section>
  );
}

/* ---------- 3D viewport window ---------- */

const arc = (cx, cy, from, to) => {
  const pts = [];
  for (let i = 0; i <= 60; i++) {
    const t = ((from + ((to - from) * i) / 60) * Math.PI) / 180;
    pts.push(`${(cx + 156 * Math.cos(t)).toFixed(1)} ${(cy - 108 * Math.cos(t) - 155 * Math.sin(t)).toFixed(1)}`);
  }
  return pts.join(" L");
};

function Model() {
  const posts = [[511, 75], [127, 345], [1060, 465], [674, 734]];
  const holes = [[131, 452], [515, 182], [1062, 573], [678, 842]];
  const dots = [[284, 138], [284, 293], [904, 731], [1130, 572], [593, 620]];
  return (
    <svg className="h-[400px] w-[400px]" viewBox="0 0 1200 1200">
      <defs>
        <linearGradient id="bore" gradientUnits="userSpaceOnUse" x1="440" y1="185" x2="209" y2="512">
          <stop offset="0" stopColor="#1c2c40" />
          <stop offset=".05" stopColor="#26354a" />
          <stop offset=".16" stopColor="#5a626c" />
          <stop offset=".3" stopColor="#85898b" />
          <stop offset=".45" stopColor="#aaaaa6" />
          <stop offset=".65" stopColor="#cbc8be" />
          <stop offset=".93" stopColor="#cfccc2" />
          <stop offset="1" stopColor="#a5a5a2" />
        </linearGradient>
        <linearGradient id="hole">
          <stop offset="0" stopColor="#8f9291" />
          <stop offset=".5" stopColor="#5c636b" />
          <stop offset="1" stopColor="#07152c" />
        </linearGradient>
        <clipPath id="cut"><path d="M132 400 L748 839 L1100 1100 L1100 100 L440 100z" /></clipPath>
      </defs>
      <path d="M57 453 L511 135 L1130 572 L676 888z" fill="#cfccc2" />
      <path d="M57 453 L676 888 V1103 L57 667z" fill="#232f3f" />
      <path d="M676 888 L1130 572 V787 L676 1103z" fill="#8a8e8d" />
      <g clipPath="url(#cut)">
        <path d={`M440 185 L${arc(284, 293, 0, -110)} L${arc(904, 731, -110, 0)}z`} fill="url(#bore)" />
      </g>
      <path d={`M748 839 L${arc(904, 731, -180, 0)}z`} fill="url(#bore)" />
      <g clipPath="url(#cut)">
        <path d={`M${arc(284, 293, -180, 0)} L440 100 L100 380z`} fill="#000" />
      </g>
      <path d="M440 185 L511 135 L560 170 L480 213z" fill="#cfccc2" />
      {holes.map(([x, y]) => <ellipse key={x} cx={x} cy={y} rx="42" ry="31" fill="url(#hole)" />)}
      <g fill="none" stroke="#6b9fb6" strokeWidth="9">
        <path d="M57 453 L511 135 L1130 572 L676 888z" />
        <path d="M57 667 L511 350 L1130 787 L676 1103z" />
        <path d="M57 453 V667 M1130 572 V787" />
        <path d="M511 135 V350 M676 888 V1103" strokeWidth="11" />
        <path d={`M${arc(284, 293, 0, 360)}`} />
        <path d={`M${arc(904, 731, 0, 360)}`} />
        <path d="M284 138 V293 L904 731" />
        {posts.map(([x, y]) => (
          <g key={x}>
            <path d={`M${x} ${y} V${y + 394}`} />
            <ellipse cx={x} cy={y} rx="44" ry="30" />
            <ellipse cx={x} cy={y + 394} rx="44" ry="30" />
          </g>
        ))}
      </g>
      <g fill="#6b9fb6" stroke="#47707f" strokeWidth="5">
        {posts.map(([x, y]) => (
          <g key={x}>
            <circle cx={x} cy={y} r="14.500" />
            <circle cx={x} cy={y + 394} r="14.500" />
            <circle cx={x + 30} cy={y + 415} r="14.500" />
          </g>
        ))}
        {dots.map(([x, y]) => <circle key={x + "-" + y} cx={x} cy={y} r="14.500" />)}
      </g>
      <path d="M594 628 H608" stroke="#b03038" strokeWidth="6" />
      <path d="M598 614 H609" stroke="#9aa53c" strokeWidth="6" />
    </svg>
  );
}

function ViewWindow() {
  const hud = [["Current: <none>", 110], ["Scale: 0.0562156", 113], ["Pitch: -0.785398", 109], ["Yaw: -0.785398", 102]];
  const menu = [["File", 24], ["Edit", 27], ["Add", 27], ["View", 34], ["Window", 56], ["Help", 32]];
  return (
    <section className="absolute left-[468px] top-[260px] flex h-[649px] w-[845px] flex-col rounded-t-lg shadow-[0_8px_44px_8px_rgba(0,0,0,0.6),0_4px_14px_rgba(0,0,0,0.5)]">
      <header className="h-[53px] shrink-0 rounded-t-lg border-t border-[#6b6960] bg-gradient-to-b from-[#5a5850] via-[#45443f] to-[#3c3b37] text-[#dfdbd2]">
        <div className="flex h-[26px] items-center pl-[8px]">
          <WindowButtons active />
          <Fit w={529} className="ml-[11px] text-[14px] font-bold">
            antimony - View - [/home/fab/anti/new/antimony/build/app/VALVECAP.sb]
          </Fit>
        </div>
        <div className="flex h-[26px] items-center gap-[18.400px] pl-[13px] text-[14px]">
          {menu.map(([m, w]) => <Fit key={m} w={w}>{m}</Fit>)}
        </div>
      </header>
      <div className="relative flex-1 bg-black pl-[352px] pt-[107px]">
        <Model />
        <div className="absolute left-[13px] top-[14px] flex flex-col items-start text-[14px] leading-[17px] text-[#b4b4b4]">
          {hud.map(([t, w]) => <Fit key={t} w={w}>{t}</Fit>)}
        </div>
        <svg className="absolute right-[26px] top-[15px] h-[77px] w-[102px]" viewBox="0 0 102 77" fill="#202020" stroke="#343434">
          {[[1, 0], [2, 0], [0, 1], [1, 1], [2, 1], [3, 1], [1, 2]].map(([c, r]) => (
            <rect key={c + "-" + r} x={0.5 + c * 25.200} y={0.5 + r * 25.200} width="25.200" height="25.200" />
          ))}
        </svg>
      </div>
    </section>
  );
}

/* ---------- desktop ---------- */

function DesktopLabel({ w, className, children }) {
  return (
    <div className={"absolute text-[14px] leading-[17px] text-white [text-shadow:1px_1px_1px_#000] " + className}>
      <Fit w={w}>{children}</Fit>
    </div>
  );
}

export default function App() {
  return (
    <main className="relative h-[1080px] w-[1920px] overflow-hidden bg-[#5c2240] font-['Open_Sans','Noto_Sans',sans-serif]">
      <svg className="absolute inset-0 h-full w-full" viewBox="0 0 1920 1080" preserveAspectRatio="none">
        <defs>
          <linearGradient id="sky" gradientUnits="userSpaceOnUse" x1="1700" y1="-20" x2="1420" y2="1180">
            <stop offset="0" stopColor="#2c1029" />
            <stop offset=".3" stopColor="#541e3c" />
            <stop offset=".6" stopColor="#661b3b" />
            <stop offset=".85" stopColor="#7c2440" />
            <stop offset="1" stopColor="#8a2d42" />
          </linearGradient>
          <linearGradient id="warm" gradientUnits="userSpaceOnUse" x1="0" y1="0" x2="1750" y2="0">
            <stop offset="0" stopColor="#b65540" />
            <stop offset=".55" stopColor="#b55c48" />
            <stop offset=".7" stopColor="#a84a4a" stopOpacity=".85" />
            <stop offset="1" stopColor="#8a2c40" stopOpacity="0" />
          </linearGradient>
        </defs>
        <path d="M0 0 H1920 V1080 H0z" fill="url(#sky)" />
        <path d="M0 980 H1750 V1080 H0z" fill="url(#warm)" />
        <path d="M1560 0 L1250 250 L1920 830 V0z" fill="#1a0820" opacity=".1" />
        <path d="M1920 0 L1400 350 L1920 700z" fill="#1a0820" opacity=".1" />
        <path d="M480 1024 L420 1080 H900 L840 1024z" fill="#8a5a30" opacity=".18" />
      </svg>
      <DesktopLabel w={61} className="left-[119px] top-[1017px]">laser.png</DesktopLabel>
      <div className="absolute left-[288px] top-[990px] flex h-[41px] w-[42px] items-end justify-center border border-[#7d6437] bg-[#b39a60] text-[13px] leading-[16px] text-[#4a3c1c]">zip</div>
      <DesktopLabel w={85} className="left-[267px] top-[1035px]">firmware.zip</DesktopLabel>
      <div className="absolute left-[603px] top-[990px] h-[41px] w-9 border border-[#8a8a8a] bg-[#cfcfcf]" />
      <DesktopLabel w={104} className="left-[570px] top-[1035px]">dock-iphone.stl</DesktopLabel>
      <FileManager />
      <GraphWindow />
      <ViewWindow />
      <Launcher />
      <TopPanel />
    </main>
  );
}
